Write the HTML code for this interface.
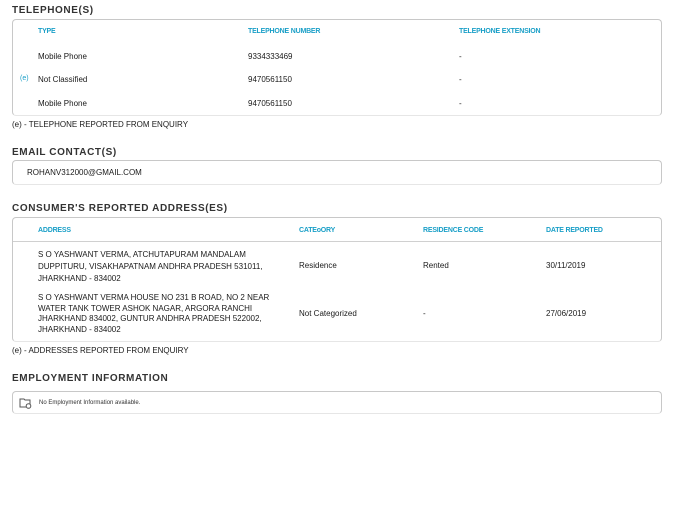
<!DOCTYPE html>
<html><head><style>
body{margin:0;width:677px;height:518px;background:#fff;font-family:"Liberation Sans",sans-serif;color:#222;position:relative;overflow:hidden}
.a{position:absolute;white-space:nowrap}
.t{font-size:10px;font-weight:bold;letter-spacing:.6px;color:#333}
.h{font-size:7px;font-weight:bold;color:#1a9fc7;letter-spacing:-.2px}
.d{font-size:8px;color:#1a1a1a}
.box{position:absolute;border:1px solid #c8c8c8;border-bottom-color:#e6e6e6;border-radius:4px}
</style></head><body>
<div class="a t" style="left:12px;top:5px">TELEPHONE(S)</div>
<div class="box" style="left:12px;top:19px;width:648px;height:95px"></div>
<div class="a h" style="left:38px;top:28px">TYPE</div>
<div class="a h" style="left:248px;top:28px">TELEPHONE NUMBER</div>
<div class="a h" style="left:459px;top:28px">TELEPHONE EXTENSION</div>
<div class="a d" style="left:38px;top:52px">Mobile Phone</div>
<div class="a d" style="left:248px;top:52px">9334333469</div>
<div class="a d" style="left:459px;top:52px">-</div>
<div class="a d" style="left:20px;top:75px;color:#1a9fc7;font-size:7px">(e)</div>
<div class="a d" style="left:38px;top:75px">Not Classified</div>
<div class="a d" style="left:248px;top:75px">9470561150</div>
<div class="a d" style="left:459px;top:75px">-</div>
<div class="a d" style="left:38px;top:99px">Mobile Phone</div>
<div class="a d" style="left:248px;top:99px">9470561150</div>
<div class="a d" style="left:459px;top:99px">-</div>
<div class="a d" style="left:12px;top:120px">(e) - TELEPHONE REPORTED FROM ENQUIRY</div>

<div class="a t" style="left:12px;top:147px">EMAIL CONTACT(S)</div>
<div class="box" style="left:12px;top:160px;width:648px;height:23px"></div>
<div class="a d" style="left:27px;top:168px">ROHANV312000@GMAIL.COM</div>

<div class="a t" style="left:12px;top:203px">CONSUMER'S REPORTED ADDRESS(ES)</div>
<div class="box" style="left:12px;top:217px;width:648px;height:123px"></div>
<div class="a" style="left:13px;top:241px;width:648px;border-top:1px solid #d0d0d0"></div>
<div class="a h" style="left:38px;top:227px">ADDRESS</div>
<div class="a h" style="left:299px;top:227px">CATEoORY</div>
<div class="a h" style="left:423px;top:227px">RESIDENCE CODE</div>
<div class="a h" style="left:546px;top:227px">DATE REPORTED</div>
<div class="a d" style="left:38px;top:249px;line-height:12px">S O YASHWANT VERMA, ATCHUTAPURAM MANDALAM<br>DUPPITURU, VISAKHAPATNAM ANDHRA PRADESH 531011,<br>JHARKHAND - 834002</div>
<div class="a d" style="left:299px;top:261px">Residence</div>
<div class="a d" style="left:423px;top:261px">Rented</div>
<div class="a d" style="left:546px;top:261px">30/11/2019</div>
<div class="a d" style="left:38px;top:293px;line-height:10.5px">S O YASHWANT VERMA HOUSE NO 231 B ROAD, NO 2 NEAR<br>WATER TANK TOWER ASHOK NAGAR, ARGORA RANCHI<br>JHARKHAND 834002, GUNTUR ANDHRA PRADESH 522002,<br>JHARKHAND - 834002</div>
<div class="a d" style="left:299px;top:309px">Not Categorized</div>
<div class="a d" style="left:423px;top:309px">-</div>
<div class="a d" style="left:546px;top:309px">27/06/2019</div>
<div class="a d" style="left:12px;top:346px">(e) - ADDRESSES REPORTED FROM ENQUIRY</div>

<div class="a t" style="left:12px;top:373px">EMPLOYMENT INFORMATION</div>
<div class="box" style="left:12px;top:391px;width:648px;height:21px"></div>
<svg class="a" style="left:19px;top:397px" width="13" height="12" viewBox="0 0 13 12"><path d="M1 2h4l1 1h5v7H1z" fill="none" stroke="#555" stroke-width="1"/><circle cx="9.5" cy="9" r="2.3" fill="#fff" stroke="#555"/></svg>
<div class="a" style="left:39px;top:400px;font-size:6px;color:#333">No Employment Information available.</div>
</body></html>
